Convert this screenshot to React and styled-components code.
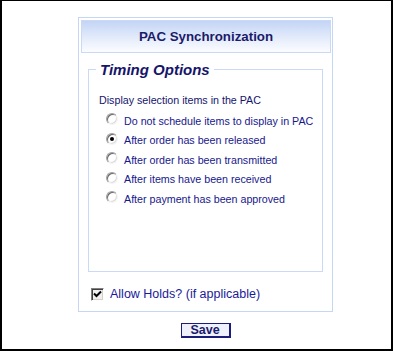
import React, {useState} from 'react';
import styled, {createGlobalStyle} from 'styled-components';

const Global = createGlobalStyle`
	html, body {
		margin: 0;
		padding: 0;
		background: #fff;
	}
	body {
		font-family: "Liberation Sans", Arial, sans-serif;
	}
`

const Window = styled.div`
	box-sizing: border-box;
	width: 393px;
	height: 351px;
	background: #fff;
	border: 2px solid #000;
	border-top-width: 1px;
	display: flex;
	flex-direction: column;
`

const Panel = styled.div`
	box-sizing: border-box;
	width: 255px;
	height: 295px;
	margin: 16px 0 0 76px;
	padding: 2px 1px 0 2px;
	border: 1px solid #c6d7f5;
	display: flex;
	flex-direction: column;
`

const Header = styled.div`
	box-sizing: border-box;
	height: 33px;
	border: 1px solid #c9d9f6;
	background: linear-gradient(to bottom, #c3d4f5 0%, #e4ecfb 55%, #fbfcff 100%);
	display: flex;
	align-items: center;
	justify-content: center;
	font-weight: bold;
	font-size: 13.3px;
	color: #1b1b6b;
	padding-bottom: 1px;
`

const Fieldset = styled.fieldset`
	box-sizing: border-box;
	height: 211px;
	margin: 8px 8px 0 7px;
	padding: 16px 0 0 10px;
	border: 1px solid #c9d9f6;
	min-width: 0;
`

const Legend = styled.legend`
	font-size: 15px;
	line-height: 17px;
	font-weight: bold;
	font-style: italic;
	color: #15156a;
	padding: 0 4px 0 4px;
	margin-left: -3px;
`

const Label = styled.div`
	font-size: 10.7px;
	color: #14146e;
	line-height: 13px;
	margin-bottom: 4px;
`

const Options = styled.div`
	display: flex;
	flex-direction: column;
	padding-left: 7px;
`

const Option = styled.label`
	display: flex;
	align-items: center;
	height: 19.5px;
	font-size: 10.7px;
	color: #17178c;
	cursor: pointer;
`

const Radio = styled.span`
	box-sizing: border-box;
	width: 12px;
	height: 12px;
	margin: -3px 6px 0 0;
	border-radius: 50%;
	border: 1px solid;
	border-color: #a0a0a0 #f4f4f4 #f4f4f4 #a0a0a0;
	box-shadow: inset 1px 1px 0 #6a6a6a, inset -1px -1px 0 #dcdcdc;
	background: #fff;
	flex: none;
	display: flex;
	align-items: center;
	justify-content: center;

	&::after {
		content: '';
		width: 4px;
		height: 4px;
		border-radius: 50%;
		background: ${p => p.$on ? '#000' : 'transparent'};
	}
`

const HoldRow = styled.label`
	display: flex;
	align-items: center;
	margin: 15px 0 0 10px;
	font-size: 12.5px;
	color: #1a1a99;
	cursor: pointer;
`

const Check = styled.span`
	box-sizing: border-box;
	width: 13px;
	height: 13px;
	margin-right: 6px;
	border: 1px solid;
	border-color: #808080 #fff #fff #808080;
	box-shadow: inset 1px 1px 0 #404040, inset -1px -1px 0 #d4d0c8;
	background: #f0f0f0;
	display: flex;
	align-items: center;
	justify-content: center;
	flex: none;
`

const Footer = styled.div`
	width: 255px;
	margin-left: 76px;
	display: flex;
	justify-content: center;
	padding-top: 11px;
`

const SaveButton = styled.button`
	box-sizing: border-box;
	width: 50px;
	height: 15px;
	padding: 0;
	border: 2px solid #1b1b7a;
	border-width: 1px 2px 2px 1px;
	background: #eef0fb;
	color: #1b1b6b;
	font-family: "Liberation Sans", Arial, sans-serif;
	font-weight: bold;
	font-size: 12.5px;
	line-height: 11px;
	cursor: pointer;
`

const choices = [
	'Do not schedule items to display in PAC',
	'After order has been released',
	'After order has been transmitted',
	'After items have been received',
	'After payment has been approved',
];

const App = () => {
	const [picked, setPicked] = useState(1);
	const [holds, setHolds] = useState(true);

	return (
		<>
		<Global />
		<Window>
			<Panel>
				<Header>PAC Synchronization</Header>
				<Fieldset>
					<Legend>Timing Options</Legend>
					<Label>Display selection items in the PAC</Label>
					<Options>
						{choices.map((c, i) => (
							<Option key={c} onClick={() => setPicked(i)}>
								<Radio $on={picked === i} />
								{c}
							</Option>
						))}
					</Options>
				</Fieldset>
				<HoldRow onClick={() => setHolds(!holds)}>
					<Check>
						{holds &&
							<svg width="9" height="9" viewBox="0 0 9 9">
								<path d="M1 3.5 L3.5 6 L8 1.5" fill="none" stroke="#000" strokeWidth="2" />
							</svg>
						}
					</Check>
					Allow Holds? (if applicable)
				</HoldRow>
			</Panel>
			<Footer>
				<SaveButton>Save</SaveButton>
			</Footer>
		</Window>
		</>
	);
}

export default App;
